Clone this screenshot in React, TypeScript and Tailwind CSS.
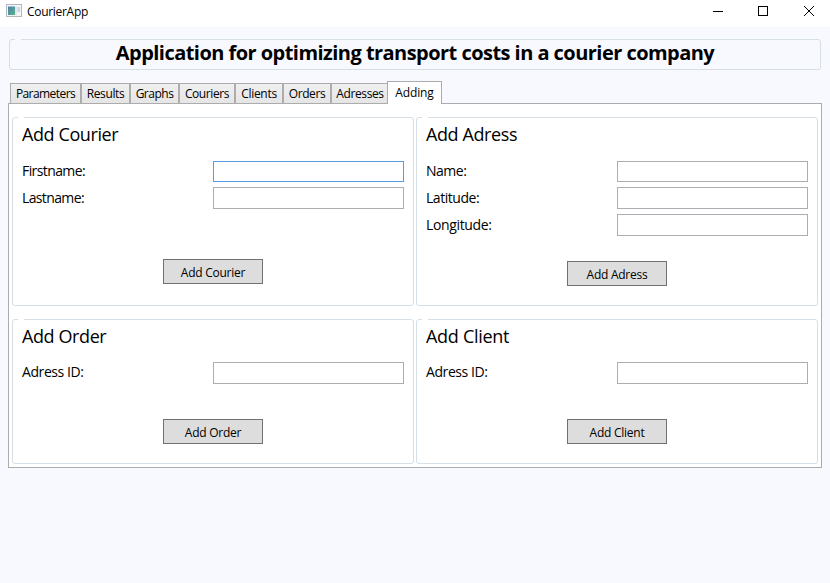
import React from "react";

type Field = { label: string; text: string; focused?: boolean; short?: boolean };

const tabs = [
  { label: "Parameters", box: "w-[71px]", text: "tracking-[-0.57px]" },
  { label: "Results", box: "w-[49px]", text: "tracking-[-0.4px]" },
  { label: "Graphs", box: "w-[49px]", text: "tracking-[-0.5px]" },
  { label: "Couriers", box: "w-[56px]", text: "tracking-[-0.4px]" },
  { label: "Clients", box: "w-[48px]", text: "tracking-[-0.3px]" },
  { label: "Orders", box: "w-[48px]", text: "tracking-[-0.4px]" },
  { label: "Adresses", box: "w-[58px]", text: "tracking-[-0.4px]" },
];

function Notch({ color }: { color: string }) {
  return <span className={`absolute -top-px left-[5px] h-px w-[6px] ${color}`} />;
}

function Group({
  title,
  titleText,
  fields,
  button,
  size,
  labelLine,
}: {
  title: string;
  titleText: string;
  fields: Field[];
  button: string;
  size: string;
  labelLine: string;
}) {
  return (
    <section className={`relative flex w-[402px] flex-col rounded-[3px] border border-[#d5dfe5] px-[9px] ${size}`}>
      <Notch color="bg-white" />
      <h2 className={`mt-[4px] h-[24px] whitespace-nowrap text-[18px] leading-[24px] ${titleText}`}>{title}</h2>
      <div className="mt-[14px] flex flex-col gap-[5px]">
        {fields.map((f) => (
          <label key={f.label} className="flex h-[22px] items-start justify-between">
            <span className={`h-[22px] whitespace-nowrap text-[14px] ${labelLine} ${f.text}`}>{f.label}</span>
            <input
              className={`w-[191px] border bg-white outline-none ${f.short ? "mt-px h-[21px]" : "h-[22px]"} ${
                f.focused ? "border-[#569de5]" : "border-[#abadb3]"
              }`}
            />
          </label>
        ))}
      </div>
      <button className="mt-auto flex h-[25px] w-[100px] items-center justify-center self-center whitespace-nowrap border border-[#707070] bg-[#dddddd] pt-[2px] text-[12px] leading-4 tracking-[-0.25px]">
        {button}
      </button>
    </section>
  );
}

export default function App() {
  return (
    <div className="flex h-[583px] w-[830px] flex-col overflow-hidden bg-[#f8f8ff] font-['Open_Sans','Noto_Sans',sans-serif] text-black">
      <header className="flex h-[27px] shrink-0 items-start bg-white">
        <svg className="ml-[6px] mt-[4px]" width="16" height="14" viewBox="0 0 16 14">
          <defs>
            <linearGradient id="screen" x1="0" y1="0" x2="1" y2="1">
              <stop offset="0" stopColor="#4d7fae" />
              <stop offset="1" stopColor="#58b487" />
            </linearGradient>
          </defs>
          <rect x=".5" y=".5" width="15" height="12" fill="#f4f5f7" stroke="#b4b7bd" />
          <rect x="2" y="2.5" width="7" height="8.5" fill="url(#screen)" />
          <rect x="9" y="2.5" width="2" height="8.5" fill="#dfe9ec" />
          <rect x="11.5" y="3" width="2.5" height="5" fill="#ccd6dc" />
        </svg>
        <span className="ml-[5px] mt-[4px] text-[12px] leading-4 tracking-[-0.3px]">CourierApp</span>
        <svg className="ml-auto mr-[15px] mt-[6px]" width="102" height="11" viewBox="0 0 102 11" fill="none" stroke="black" shapeRendering="crispEdges">
          <path d="M0 5.5h10M45.5 0.5h9v9h-9z" />
          <path d="M91 0l10 10m0-10l-10 10" shapeRendering="auto" />
        </svg>
      </header>

      <div className="relative ml-[9px] mt-[12px] h-[31px] w-[812px] shrink-0 rounded-[3px] border border-[#d5dfe5]">
        <Notch color="bg-[#f8f8ff]" />
        <h1 className="whitespace-nowrap text-center text-[20px] font-bold leading-[25px] tracking-[-0.54px]">
          Application for optimizing transport costs in a courier company
        </h1>
      </div>

      <nav className="mt-[11px] flex h-[22px] shrink-0 items-end pl-[10px]">
        {tabs.map((t) => (
          <div
            key={t.label}
            className={`flex h-[20px] items-center justify-center whitespace-nowrap border-x border-t border-[#acacac] bg-linear-to-b from-[#f0f0f0] to-[#e5e5e5] pt-px text-[12px] leading-4 ${t.box} ${t.text}`}
          >
            {t.label}
          </div>
        ))}
        <div className="relative z-10 -mb-px -ml-[2px] flex h-[23px] w-[55px] items-center justify-center border-x border-t border-[#acacac] bg-white text-[12px] leading-4 tracking-[-0.1px]">
          Adding
        </div>
      </nav>

      <main className="ml-[8px] flex h-[365px] w-[814px] shrink-0 flex-col gap-[13px] border border-[#acacac] bg-white pl-[3px] pt-[13px]">
        <div className="flex gap-[2px]">
          <Group
            title="Add Courier"
            titleText="tracking-[-0.4px]"
            fields={[
              { label: "Firstname:", text: "tracking-[-0.6px]", focused: true, short: true },
              { label: "Lastname:", text: "tracking-[-0.63px]" },
            ]}
            button="Add Courier"
            size="h-[189px] pb-[21px]"
            labelLine="leading-[22px]"
          />
          <Group
            title="Add Adress"
            titleText="tracking-[-0.4px]"
            fields={[
              { label: "Name:", text: "tracking-[-0.5px]", short: true },
              { label: "Latitude:", text: "tracking-[-0.45px]" },
              { label: "Longitude:", text: "tracking-[-0.35px]" },
            ]}
            button="Add Adress"
            size="h-[189px] pb-[19px]"
            labelLine="leading-[22px]"
          />
        </div>
        <div className="flex gap-[2px]">
          <Group
            title="Add Order"
            titleText="tracking-[-0.4px]"
            fields={[{ label: "Adress ID:", text: "tracking-[-0.42px]" }]}
            button="Add Order"
            size="h-[145px] pb-[19px]"
            labelLine="leading-[20px]"
          />
          <Group
            title="Add Client"
            titleText="tracking-[-0.3px]"
            fields={[{ label: "Adress ID:", text: "tracking-[-0.42px]" }]}
            button="Add Client"
            size="h-[145px] pb-[19px]"
            labelLine="leading-[20px]"
          />
        </div>
      </main>
    </div>
  );
}
